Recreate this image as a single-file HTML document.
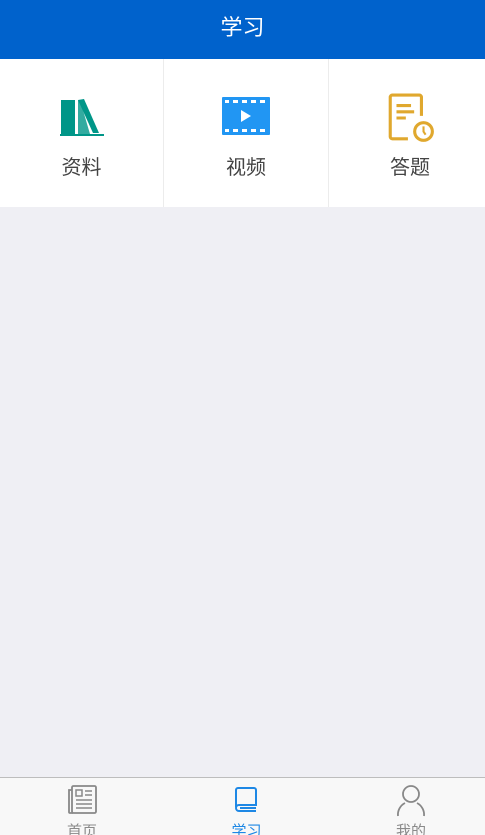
<!DOCTYPE html>
<html><head><meta charset="utf-8"><style>
*{margin:0;padding:0;box-sizing:border-box}
html,body{width:485px;height:835px;overflow:hidden}
body{background:#efeff4;font-family:"Liberation Sans","Noto Sans CJK SC",sans-serif;position:relative}
.hdr{height:59px;background:#0062cc;color:#fff;text-align:center;line-height:56px;font-size:22px}
.grid{position:absolute;top:59px;left:0;width:485px;height:148px;background:#fff;display:flex}
.cell{position:relative;border-right:1px solid #ececec}
.cell:last-child{border-right:none}
.cell svg{position:absolute;top:35px;left:50%;transform:translateX(-50%)}
.cell .t{position:absolute;top:92px;width:100%;text-align:center;font-size:20px;color:#444}
.tab{position:absolute;top:777px;left:0;width:485px;height:58px;background:#f8f8f8;border-top:1px solid #bdbdbd;display:flex}
.ti{position:relative;text-align:center}
.ti svg{position:absolute;top:6px;left:50%;transform:translateX(-50%)}
.ti .t{position:absolute;top:42px;width:100%;font-size:15px;color:#8a8a8a}
.sh{padding-left:6px}
.sh .t{left:3px}
</style></head><body>
<div class="hdr">学习</div>
<div class="grid">
<div class="cell" style="width:164px"><svg width="46" height="44" viewBox="0 0 46 44"><path d="M2 6h14v34H2z" fill="#009688"/><path d="M19 6l6-1 15 34h-6z" fill="#009688"/><path d="M19 6h2l10 34h-12z" fill="#009688" opacity=".8"/><path d="M1 41h44" stroke="#009688" stroke-width="2"/></svg><div class="t">资料</div></div>
<div class="cell" style="width:165px"><svg width="50" height="42" viewBox="0 0 50 42"><rect x="1" y="3" width="48" height="38" rx="1" fill="#2196f3"/><g fill="#fff"><rect x="4" y="6" width="4" height="3"/><rect x="12" y="6" width="5" height="3"/><rect x="21" y="6" width="5" height="3"/><rect x="30" y="6" width="5" height="3"/><rect x="39" y="6" width="5" height="3"/><rect x="4" y="35" width="4" height="3"/><rect x="12" y="35" width="5" height="3"/><rect x="21" y="35" width="5" height="3"/><rect x="30" y="35" width="5" height="3"/><rect x="39" y="35" width="5" height="3"/><path d="M20 16l10 6-10 6z"/></g></svg><div class="t">视频</div></div>
<div class="cell" style="width:156px"><svg width="48" height="52" viewBox="0 0 46 50" style="top:33px;left:calc(50% + 3px)"><path d="M21 45H6a2 2 0 0 1-2-2V5a2 2 0 0 1 2-2h26a2 2 0 0 1 2 2v18" fill="none" stroke="#e0a82e" stroke-width="3"/><path d="M10 13h14M10 19h17M10 25h9" stroke="#e0a82e" stroke-width="3"/><circle cx="36" cy="38" r="8.5" fill="none" stroke="#e0a82e" stroke-width="3"/><path d="M36 33v5l2 3" fill="none" stroke="#e0a82e" stroke-width="2"/></svg><div class="t" style="left:3px">答题</div></div>
</div>
<div class="tab">
<div class="ti" style="width:164px"><svg width="32" height="32" viewBox="0 0 32 32"><rect x="6" y="2" width="24" height="27" rx="1.5" fill="none" stroke="#888" stroke-width="1.8"/><path d="M6 6H3v22a1 1 0 0 0 1 1h3" fill="none" stroke="#888" stroke-width="1.8"/><rect x="10" y="6" width="6" height="6" fill="none" stroke="#888" stroke-width="1.5"/><path d="M19 7h7M19 11h7M10 16h16M10 20h16M10 24h16" stroke="#888" stroke-width="1.5"/></svg><div class="t">首页</div></div>
<div class="ti" style="width:165px"><svg width="32" height="32" viewBox="0 0 32 32"><path d="M5 23V6a2 2 0 0 1 2-2h16a2 2 0 0 1 2 2v15H8a3 3 0 0 0 0 6h17" fill="none" stroke="#1e88e5" stroke-width="2"/><path d="M9 24h16" stroke="#1e88e5" stroke-width="2"/></svg><div class="t" style="color:#1e88e5">学习</div></div>
<div class="ti" style="width:156px"><svg width="32" height="34" viewBox="0 0 32 34" style="left:calc(50% + 4px)"><circle cx="16" cy="10" r="8" fill="none" stroke="#888" stroke-width="1.8"/><path d="M3 32a13 13 0 0 1 7-13M29 32a13 13 0 0 0-7-13" fill="none" stroke="#888" stroke-width="1.8"/></svg><div class="t" style="left:4px">我的</div></div>
</div>
</body></html>
